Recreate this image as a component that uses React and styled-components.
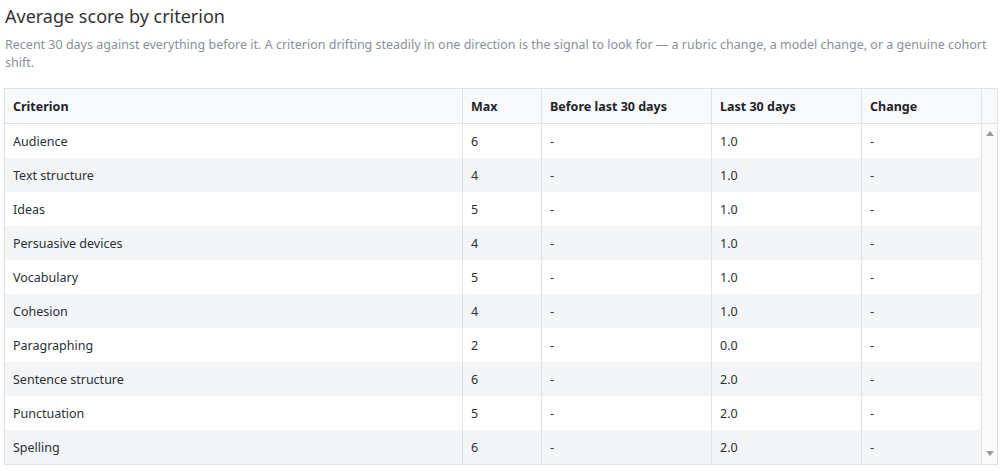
import React from "react";
import styled, { createGlobalStyle } from "styled-components";

const GlobalStyle = createGlobalStyle`
  html, body {
    margin: 0;
    padding: 0;
    background: #fff;
    font-family: "Noto Sans", "Open Sans", sans-serif;
  }
`;

const COLS = "458px 79px 170px 150px 120px";

const Page = styled.div`
  padding: 4px 7px 0 4px;
`;

const Title = styled.h2`
  margin: 0 0 0 1px;
  font-size: 18px;
  font-weight: 400;
  line-height: 24px;
  color: #333;
`;

const Description = styled.p`
  margin: 8px 0 16px 1px;
  font-size: 12.5px;
  line-height: 18px;
  color: #8a8f99;
`;

const Table = styled.div`
  border: 1px solid #e1e2e5;
  width: 992px;
`;

const HeadRow = styled.div`
  display: grid;
  grid-template-columns: ${COLS} 15px;
  height: 34px;
  background: #f8f9fa;
  border-bottom: 1px solid #e1e2e5;
`;

const HeadCell = styled.div`
  display: flex;
  align-items: center;
  padding: 0 8px;
  font-size: 12.5px;
  font-weight: 700;
  color: #1f2329;
  border-right: ${(p) => (p.$last ? "none" : "1px solid #e1e2e5")};
`;

const Body = styled.div`
  display: flex;
  height: 340px;
`;

const Rows = styled.div`
  flex: 1;
  overflow: hidden;
`;

const Scrollbar = styled.div`
  width: 15px;
  display: flex;
  flex-direction: column;
  justify-content: space-between;
  align-items: center;
  padding: 7px 0 8px;
  background: #fafafa;
`;

const Arrow = styled.span`
  width: 0;
  height: 0;
  border-left: 4.5px solid transparent;
  border-right: 4.5px solid transparent;
  ${(p) =>
    p.$down
      ? "border-top: 5px solid #9c9c9c;"
      : "border-bottom: 5px solid #9c9c9c;"}
`;

const Row = styled.div`
  display: grid;
  grid-template-columns: ${COLS};
  height: 34px;
  background: ${(p) => (p.$odd ? "#f4f5f7" : "#fff")};
`;

const Cell = styled.div`
  display: flex;
  align-items: center;
  padding: 0 8px;
  font-size: 12.5px;
  color: #2b3038;
  border-right: ${(p) => (p.$last ? "none" : "1px solid #e1e2e5")};
`;

const rows = [
  ["Audience", 6, "1.0"],
  ["Text structure", 4, "1.0"],
  ["Ideas", 5, "1.0"],
  ["Persuasive devices", 4, "1.0"],
  ["Vocabulary", 5, "1.0"],
  ["Cohesion", 4, "1.0"],
  ["Paragraphing", 2, "0.0"],
  ["Sentence structure", 6, "2.0"],
  ["Punctuation", 5, "2.0"],
  ["Spelling", 6, "2.0"],
];

export default function App() {
  return (
    <Page>
      <GlobalStyle />
      <Title>Average score by criterion</Title>
      <Description>
        Recent 30 days against everything before it. A criterion drifting
        steadily in one direction is the signal to look for — a rubric change,
        a model change, or a genuine cohort shift.
      </Description>
      <Table>
        <HeadRow>
          <HeadCell>Criterion</HeadCell>
          <HeadCell>Max</HeadCell>
          <HeadCell>Before last 30 days</HeadCell>
          <HeadCell>Last 30 days</HeadCell>
          <HeadCell>Change</HeadCell>
          <HeadCell $last />
        </HeadRow>
        <Body>
          <Rows>
            {rows.map(([name, max, last], i) => (
              <Row key={name} $odd={i % 2 === 1}>
                <Cell>{name}</Cell>
                <Cell>{max}</Cell>
                <Cell>-</Cell>
                <Cell>{last}</Cell>
                <Cell>-</Cell>
              </Row>
            ))}
          </Rows>
          <Scrollbar>
            <Arrow />
            <Arrow $down />
          </Scrollbar>
        </Body>
      </Table>
    </Page>
  );
}
